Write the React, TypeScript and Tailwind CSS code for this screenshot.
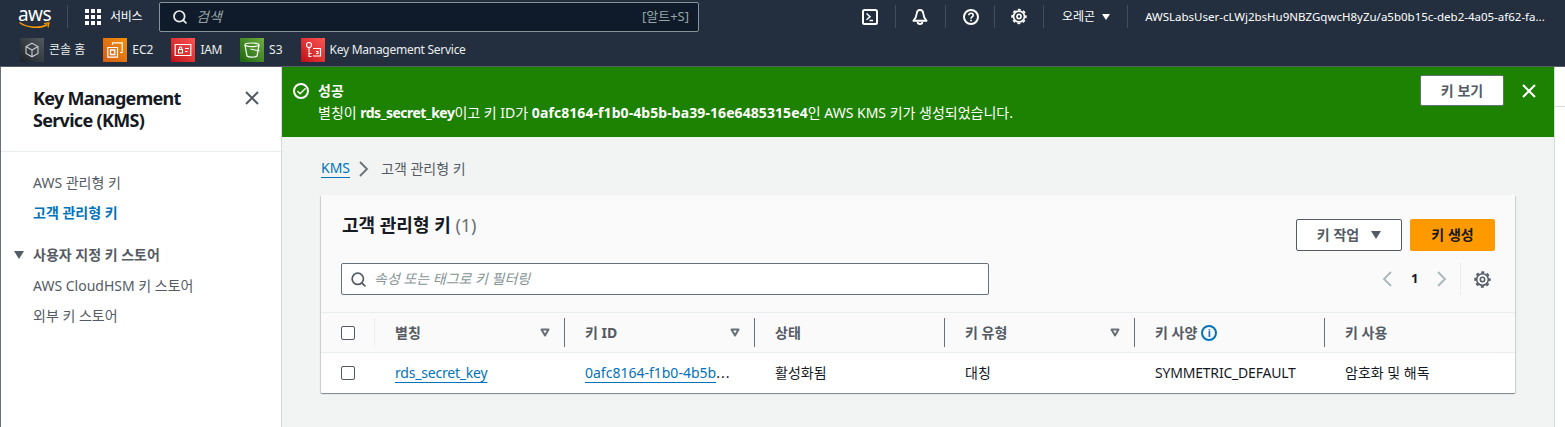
import { Check, Search } from "lucide-react";

const fontStack = "font-['Noto_Sans','Noto_Sans_CJK_KR',sans-serif]";

function ConsoleIcon() {
  return (
    <svg width="16" height="16" viewBox="0 0 16 16" fill="none" stroke="#fff" strokeWidth="2">
      <rect x="1" y="1" width="14" height="14" rx="1.5" />
      <path d="M4.5 4.5 8 7.7l-3.500 3M7.500 11.500H11" strokeWidth="1.500" />
    </svg>
  );
}

function BellIcon() {
  return (
    <svg width="17" height="18" viewBox="0 0 17 18" fill="none" stroke="#fff" strokeWidth="2">
      <path d="M8.500 1.500c-2 0-3.200 1.500-3.400 3.500-.3 3-1.300 5.500-3.600 8h14c-2.300-2.500-3.300-5-3.600-8-.2-2-1.400-3.500-3.400-3.500Z" strokeLinejoin="round" />
      <path d="M6 14c0 1.500 1 2.500 2.500 2.500S11 15.500 11 14" />
    </svg>
  );
}

function HelpIcon() {
  return (
    <svg width="16" height="16" viewBox="0 0 16 16" fill="none" stroke="#fff" strokeWidth="2">
      <circle cx="8" cy="8" r="7" />
      <path d="M5.800 6.300C5.900 5 6.800 4.300 8 4.300c1.300 0 2.200.8 2.200 1.900 0 1.700-2.200 1.800-2.200 3.500" strokeWidth="1.600" />
      <path d="M8 10.800v1.500" strokeWidth="1.700" />
    </svg>
  );
}

function GearIcon({ stroke, width }: { stroke: string; width: number }) {
  return (
    <svg width="17" height="17" viewBox="0 0 17 17" fill="none" stroke={stroke}>
      <circle cx="8.500" cy="8.500" r="5.800" strokeWidth={width} />
      <circle cx="8.500" cy="8.500" r="7.300" strokeWidth="1.800" strokeDasharray="3.100 2.630" strokeDashoffset="1.500" />
      <circle cx="8.500" cy="8.500" r="2.200" strokeWidth={width} />
    </svg>
  );
}

function CloseIcon({ color }: { color: string }) {
  return (
    <svg width="14" height="14" viewBox="0 0 14 14" fill="none" stroke={color} strokeWidth="2">
      <path d="M1 1l12 12M13 1 1 13" />
    </svg>
  );
}

function Chevron({ left, color }: { left?: boolean; color: string }) {
  return (
    <svg width="10" height="16" viewBox="0 0 10 16" fill="none" stroke={color} strokeWidth="1.800">
      <path d={left ? "M9 1 2 8l7 7" : "M1 1l7 7-7 7"} />
    </svg>
  );
}

function ServiceTile({ className, children }: { className: string; children: React.ReactNode }) {
  return (
    <span className={`flex h-6 w-6 shrink-0 items-center justify-center ${className}`}>
      <svg width="18" height="18" viewBox="0 0 18 18" fill="none" stroke="#fff" strokeWidth="1.100">
        {children}
      </svg>
    </span>
  );
}

function ShortcutItem({ icon, label, className }: { icon: React.ReactNode; label: string; className?: string }) {
  return (
    <div className={`flex items-center gap-[5px] text-xs text-[#eaeded] ${className ?? ""}`}>
      {icon}
      <span>{label}</span>
    </div>
  );
}

function TopNav() {
  return (
    <header className="h-[67px] shrink-0 border-b border-[#545b64] bg-[#232f3e] text-white">
      <div className="flex h-[33px] items-center">
        <div className="relative ml-[19px] flex h-[26px] w-[31px] justify-center">
          <span className="text-[19px] leading-[20px] tracking-[-0.5px] text-white">aws</span>
          <svg className="absolute left-0 top-[17px]" width="32" height="10" viewBox="0 0 32 10" fill="none">
            <path d="M0.500 1.500C8 7 21 8 28.500 3.500" stroke="#f90" strokeWidth="1.500" />
            <path d="M25 2.500l5-.7-1 4.500" stroke="#f90" strokeWidth="1.200" />
          </svg>
        </div>
        <div className="ml-[17px] h-[23px] w-px bg-[#414d5c]" />
        <div className="ml-[17px] grid grid-cols-[4px_4px_4px] gap-[2px] [&>i]:h-[4px] [&>i]:w-[4px] [&>i]:bg-white">
          <i /><i /><i /><i /><i /><i /><i /><i /><i />
        </div>
        <span className="ml-[9px] w-[33px] whitespace-nowrap text-xs tracking-[-0.3px]">서비스</span>
        <div className="ml-[16px] flex h-[30px] w-[540px] items-center rounded-[2px] border border-[#879596] bg-[#0f1b2a] pl-[12px] pr-[9px]">
          <Search size={16} strokeWidth={2.600} className="text-[#eaeded]" />
          <span className="ml-[8px] text-sm italic text-[#95a5a6]">검색</span>
          <span className="ml-auto text-[13px] text-[#95a5a6]">[알트+S]</span>
        </div>
        <div className="ml-[163px] flex w-[16px] justify-center"><ConsoleIcon /></div>
        <div className="ml-[17px] h-[23px] w-px bg-[#414d5c]" />
        <div className="ml-[16px] flex w-[16px] justify-center"><BellIcon /></div>
        <div className="ml-[17px] h-[23px] w-px bg-[#414d5c]" />
        <div className="ml-[17px] flex w-[16px] justify-center"><HelpIcon /></div>
        <div className="ml-[15px] h-[23px] w-px bg-[#414d5c]" />
        <div className="ml-[16px] flex w-[16px] justify-center"><GearIcon stroke="#fff" width={1.800} /></div>
        <div className="ml-[16px] h-[23px] w-px bg-[#414d5c]" />
        <span className="ml-[18px] text-xs">오레곤</span>
        <span className="ml-[7px] h-0 w-0 border-x-[4px] border-t-[6px] border-x-transparent border-t-white" />
        <div className="ml-[17px] h-[23px] w-px bg-[#414d5c]" />
        <span className="ml-[17px] whitespace-nowrap text-[11.500px]">AWSLabsUser-cLWj2bsHu9NBZGqwcH8yZu/a5b0b15c-deb2-4a05-af62-fa...</span>
      </div>
      <div className="flex h-[33px] items-center gap-[18px] pl-[20px]">
        <ShortcutItem
          label="콘솔 홈"
          icon={
            <ServiceTile className="bg-linear-to-tr from-[#1d2329] to-[#535a60]">
              <path d="M9 2.200 15 5.500v7L9 15.800 3 12.500v-7ZM3 5.500 9 9l6-3.500M9 9v6.800" stroke="#c7ccd0" />
            </ServiceTile>
          }
        />
        <ShortcutItem
          label="EC2"
          icon={
            <ServiceTile className="bg-linear-to-tr from-[#d05c17] to-[#f78e04]">
              <path d="M6.500 4V1.800h9.700v9.700H14M1.800 6.500h9.700v9.700H1.800Z" strokeWidth="1.200" />
              <path d="M4.500 9h4.300v4.500H4.500Z" strokeWidth="1.300" />
            </ServiceTile>
          }
        />
        <ShortcutItem
          label="IAM"
          className="tracking-[-0.3px]"
          icon={
            <ServiceTile className="bg-linear-to-tr from-[#bd0816] to-[#ff5252]">
              <path d="M1.200 3.500h15.600v11H1.200Z" strokeWidth="1.200" />
              <path d="M4.500 8.500h4v3.500h-4ZM5.300 8.500V7a1.200 1.200 0 0 1 2.400 0v1.500M11 7.500h4M11 10.500h2.500" />
            </ServiceTile>
          }
        />
        <ShortcutItem
          label="S3"
          icon={
            <ServiceTile className="bg-linear-to-tr from-[#1b660f] to-[#6cae3e]">
              <ellipse cx="9" cy="3.800" rx="7" ry="1.800" strokeWidth="1.200" />
              <path d="M2 4 4 15c1.500 1.500 8.500 1.500 10 0l2-11" strokeWidth="1.200" />
              <path d="M7.500 8 16.500 10" />
            </ServiceTile>
          }
        />
        <ShortcutItem
          label="Key Management Service"
          className="tracking-[-0.27px]"
          icon={
            <ServiceTile className="bg-linear-to-tr from-[#bd0816] to-[#ff5252]">
              <circle cx="5" cy="4" r="2.500" strokeWidth="1.200" />
              <path d="M5 6.500V16M5 12.500h2.500M5 15.500h2.500M9 7.500h7.500v7.500H9M12 10.500h2v2h-2" />
            </ServiceTile>
          }
        />
      </div>
    </header>
  );
}

function Sidebar() {
  return (
    <aside className="w-[282px] shrink-0 border-l border-r border-l-[#687078] border-r-[#d5dbdb] bg-white">
      <div className="flex h-[85px] items-start justify-between border-b border-[#eaeded] pl-[32px] pr-[22px] pt-[20px]">
        <h2 className="text-[18px] font-bold leading-[22px] tracking-[-0.7px] text-[#16191f]">
          Key Management
          <br />
          Service (KMS)
        </h2>
        <span className="mt-[4px]"><CloseIcon color="#545b64" /></span>
      </div>
      <nav className="pl-[32px] pt-[20px] text-sm text-[#545b64]">
        <div className="h-[30px] leading-[21px]">AWS 관리형 키</div>
        <div className="h-[42px] font-bold leading-[21px] text-[#0073bb]">고객 관리형 키</div>
        <div className="relative h-[31px] font-bold leading-[21px]">
          <span className="absolute -left-[19px] top-[7px] h-0 w-0 border-x-[5px] border-t-[8px] border-x-transparent border-t-[#545b64]" />
          사용자 지정 키 스토어
        </div>
        <div className="h-[30px] leading-[21px]">AWS CloudHSM 키 스토어</div>
        <div className="leading-[21px]">외부 키 스토어</div>
      </nav>
    </aside>
  );
}

function FlashBar() {
  return (
    <div className="flex h-[70px] bg-[#1d8102] pl-[11px] text-white">
      <div className="mt-[16px] h-[16px] w-[16px] rounded-full border-2 border-white">
        <Check size={11} strokeWidth={3} className="ml-[1px] mt-[1px]" />
      </div>
      <div className="ml-[9px] pt-[13px] text-sm leading-[22px]">
        <div className="font-bold">성공</div>
        <div>
          별칭이 <b className="tracking-[-0.5px]">rds_secret_key</b>이고 키 ID가 <b className="tracking-[0.08px]">0afc8164-f1b0-4b5b-ba39-16e6485315e4</b>인 AWS KMS 키가 생성되었습니다.
        </div>
      </div>
      <button className="ml-auto mt-[8px] h-[31px] w-[84px] rounded-[2px] border border-[#687078] bg-white text-sm font-bold text-[#545b64]">
        키 보기
      </button>
      <span className="ml-[18px] mr-[18px] mt-[17px]"><CloseIcon color="#fff" /></span>
    </div>
  );
}

function HeaderCell({ label, sortable, first, info }: { label: string; sortable?: boolean; first?: boolean; info?: boolean }) {
  return (
    <div className={`flex h-[29px] items-center pl-[20px] pr-[14px] text-sm font-bold text-[#545b64] ${first ? "border-l border-[#eaeded]" : "border-l border-[#687078]"}`}>
      <span>{label}</span>
      {info && (
        <span className="ml-[4px] flex h-[16px] w-[16px] items-center justify-center rounded-full border-2 border-[#0073bb] text-[10px] font-bold leading-none text-[#0073bb]">
          i
        </span>
      )}
      {sortable && (
        <svg className="ml-auto" width="10" height="9" viewBox="0 0 10 9" fill="none" stroke="#687078" strokeWidth="2">
          <path d="M1.500 1.500h7L5 7.500Z" strokeLinejoin="round" />
        </svg>
      )}
    </div>
  );
}

function KeysCard() {
  return (
    <section className="mt-[15px] w-[1194px] rounded-[1px] bg-white shadow-[0_1px_1px_0_rgba(0,28,36,0.3),1px_1px_1px_0_rgba(0,28,36,0.15),-1px_1px_1px_0_rgba(0,28,36,0.15)]">
      <div className="h-[117px] bg-[#fafafa] pl-[21px] pr-[20px] pt-[19px]">
        <div className="flex items-start justify-between">
          <h1 className="-mt-[1px] text-[18px] font-bold leading-[24px] text-[#16191f]">
            고객 관리형 키 <span className="font-normal text-[#687078]">(1)</span>
          </h1>
          <div className="mt-[5px] flex gap-[8px]">
            <button className="flex h-[32px] w-[106px] items-center justify-center gap-[12px] rounded-[2px] border border-[#545b64] bg-white text-sm font-bold text-[#545b64]">
              키 작업
              <span className="h-0 w-0 border-x-[5.500px] border-t-[8px] border-x-transparent border-t-[#545b64]" />
            </button>
            <button className="h-[32px] w-[85px] rounded-[2px] bg-[#ff9900] text-sm font-bold text-[#16191f]">키 생성</button>
          </div>
        </div>
        <div className="-ml-[1px] mt-[12px] flex items-center">
          <div className="flex h-[32px] w-[648px] items-center rounded-[2px] border border-[#687078] bg-white pl-[8px]">
            <Search size={17} strokeWidth={2.400} className="text-[#545b64]" />
            <span className="ml-[7px] text-sm italic text-[#879596]">속성 또는 태그로 키 필터링</span>
          </div>
          <div className="ml-auto flex items-center">
            <Chevron left color="#aab7b8" />
            <span className="ml-[19px] w-[8px] text-[13px] font-bold text-[#16191f]">1</span>
            <span className="ml-[18px] flex"><Chevron color="#aab7b8" /></span>
            <div className="ml-[13px] h-[32px] w-px bg-[#eaeded]" />
            <span className="ml-[13px] mr-[4px] flex"><GearIcon stroke="#545b64" width={1.500} /></span>
          </div>
        </div>
      </div>
      <div className="grid h-[41px] grid-cols-[53px_repeat(6,190px)] items-center border-y border-[#eaeded] bg-[#fafafa]">
        <div className="ml-[20px] h-[14px] w-[14px] rounded-[2px] border border-[#545b64] bg-white" />
        <HeaderCell label="별칭" sortable first />
        <HeaderCell label="키 ID" sortable />
        <HeaderCell label="상태" />
        <HeaderCell label="키 유형" sortable />
        <HeaderCell label="키 사양" info />
        <HeaderCell label="키 사용" />
      </div>
      <div className="grid h-[40px] grid-cols-[53px_repeat(6,190px)] items-center text-sm text-[#16191f]">
        <div className="ml-[20px] h-[14px] w-[14px] rounded-[2px] border border-[#545b64] bg-white" />
        <div className="pl-[21px]">
          <a className="tracking-[-0.2px] text-[#0073bb] underline underline-offset-[4px]">rds_secret_key</a>
        </div>
        <div className="whitespace-nowrap pl-[21px]">
          <a className="text-[#0073bb] underline underline-offset-[4px]">0afc8164-f1b0-4b5b</a>
          <span className="tracking-[1px]">...</span>
        </div>
        <div className="pl-[21px]">활성화됨</div>
        <div className="pl-[21px]">대칭</div>
        <div className="pl-[21px] tracking-[-0.2px]">SYMMETRIC_DEFAULT</div>
        <div className="pl-[21px]">암호화 및 해독</div>
      </div>
    </section>
  );
}

export default function App() {
  return (
    <div className={`flex h-[427px] w-[1565px] flex-col overflow-hidden bg-[#f2f3f3] ${fontStack}`}>
      <TopNav />
      <div className="flex min-h-0 flex-1">
        <Sidebar />
        <main className="min-w-0 flex-1">
          <FlashBar />
          <div className="pl-[39px]">
            <div className="mt-[19px] flex h-[24px] items-center pt-[1px] text-sm text-[#545b64]">
              <a className="border-b border-[#0073bb] leading-[18px] text-[#0073bb]">KMS</a>
              <span className="ml-[9px] mr-[12px] flex"><Chevron color="#687078" /></span>
              <span>고객 관리형 키</span>
            </div>
            <KeysCard />
          </div>
        </main>
        <div className="w-[11px] shrink-0 border-l border-[#d5dbdb] bg-white">
          <div className="h-[40px] border-b border-[#d5dbdb]" />
        </div>
      </div>
    </div>
  );
}
